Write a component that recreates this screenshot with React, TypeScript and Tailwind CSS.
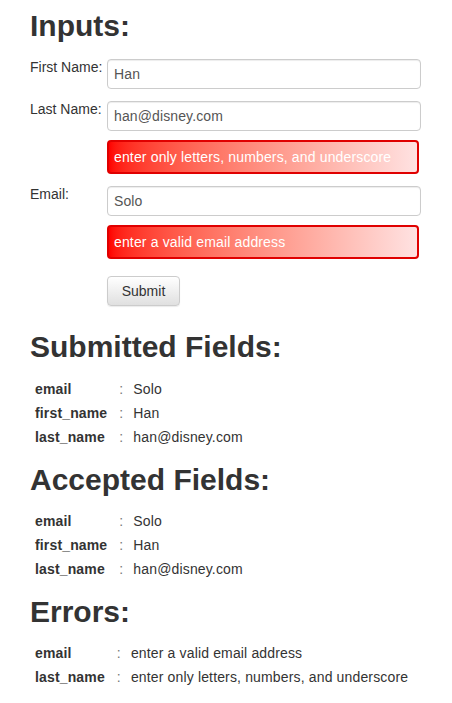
const submitted = [
  ["email", "Solo"],
  ["first_name", "Han"],
  ["last_name", "han@disney.com"],
];

const errors = [
  ["email", "enter a valid email address"],
  ["last_name", "enter only letters, numbers, and underscore"],
];

function Field({ label, value, error }: { label: string; value: string; error?: string }) {
  return (
    <div className="flex items-start">
      <label className="w-[77px] shrink-0 -mt-[2px] leading-5 tracking-normal">{label}</label>
      <div className="flex flex-col">
        <input
          readOnly
          value={value}
          className="h-[30px] w-[314px] rounded border border-[#ccc] bg-white px-[6px] text-[14px] tracking-[0.12px] text-[#555] shadow-[inset_0_1px_1px_rgba(0,0,0,0.075)] outline-none"
          style={{ fontFamily: '"Liberation Sans", Arial, sans-serif' }}
        />
        {error && (
          <div className="mt-[9px] flex h-[34px] w-[312px] items-center rounded border-2 border-[#e00000] bg-gradient-to-r from-[#ff0000] to-[#ffe2e2] px-[5px] text-white">
            {error}
          </div>
        )}
      </div>
    </div>
  );
}

function Table({ rows }: { rows: string[][] }) {
  return (
    <table className="border-collapse">
      <tbody>
        {rows.map(([k, v]) => (
          <tr key={k} className="h-6">
            <td className="py-[2px] pl-[5px] pr-[7px] font-bold">{k}</td>
            <td className="py-[2px] pl-[5px] pr-[5px] text-[#777]">:</td>
            <td className="py-[2px] pl-[5px]">{v}</td>
          </tr>
        ))}
      </tbody>
    </table>
  );
}

function Heading({ children, className = "" }: { children: string; className?: string }) {
  return <h2 className={"text-[30px] font-bold leading-[33px] tracking-normal " + className}>{children}</h2>;
}

export default function App() {
  return (
    <div
      className="min-h-[703px] bg-white pl-[30px] pt-[9px] text-[14px] leading-5 tracking-[0.15px] text-[#333]"
      style={{ fontFamily: '"Liberation Sans", Arial, sans-serif' }}
    >
      <Heading>Inputs:</Heading>
      <div className="mt-[17px] flex flex-col gap-[12px]">
        <Field label="First Name:" value="Han" />
        <Field label="Last Name:" value="han@disney.com" error="enter only letters, numbers, and underscore" />
        <Field label="Email:" value="Solo" error="enter a valid email address" />
      </div>
      <div className="mt-[17px] pl-[77px]">
        <button className="h-[30px] w-[73px] rounded border border-[#ccc] bg-gradient-to-b from-white to-[#e0e0e0] text-[14px] tracking-normal text-[#333] shadow-[0_1px_1px_rgba(0,0,0,0.08)]">
          Submit
        </button>
      </div>

      <Heading className="mt-[24px] mb-[14px]">Submitted Fields:</Heading>
      <Table rows={submitted} />

      <Heading className="mt-[14px] mb-[13px]">Accepted Fields:</Heading>
      <Table rows={submitted} />

      <Heading className="mt-[14px] mb-[13px]">Errors:</Heading>
      <Table rows={errors} />
    </div>
  );
}
